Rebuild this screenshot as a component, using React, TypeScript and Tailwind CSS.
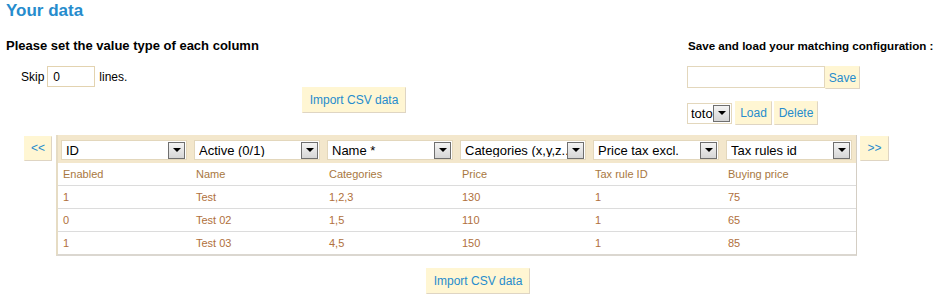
import React from 'react';

const columns = [
  'ID',
  'Active (0/1)',
  'Name *',
  'Categories (x,y,z...)',
  'Price tax excl.',
  'Tax rules id',
];

const labels = ['Enabled', 'Name', 'Categories', 'Price', 'Tax rule ID', 'Buying price'];

const rows = [
  ['1', 'Test', '1,2,3', '130', '1', '75'],
  ['0', 'Test 02', '1,5', '110', '1', '65'],
  ['1', 'Test 03', '4,5', '150', '1', '85'],
];

const Button = ({ children, className = '' }: { children: React.ReactNode; className?: string }) => (
  <button
    className={`flex items-center justify-center bg-[#fff6d3] border border-[#fff6d3] border-r-[#dfd5c3] border-b-[#dfd5c3] text-[#268ccd] text-[12px] leading-none ${className}`}
  >
    {children}
  </button>
);

const Arrow = () => (
  <span className="flex items-center justify-center w-[17px] h-[17px] shrink-0 border border-[#6f6f6f] bg-gradient-to-b from-[#f4f4f4] to-[#d6d6d6]">
    <span className="w-0 h-0 border-x-[4px] border-x-transparent border-t-[4px] border-t-black" />
  </span>
);

const FakeSelect = ({ value, className = '' }: { value: string; className?: string }) => (
  <div
    className={`flex items-center bg-white border border-[#e3d7bc] text-[13px] text-black leading-none ${className}`}
  >
    <span className="flex-1 min-w-0 overflow-hidden whitespace-nowrap">{value}</span>
    <Arrow />
  </div>
);

export default function App() {
  return (
    <div className="w-[938px] h-[301px] bg-white overflow-hidden font-['Liberation_Sans',Arial,sans-serif] text-[12px] text-black">
      <h2 className="pl-[6px] text-[17px] leading-[22px] font-bold text-[#268ccd]">Your data</h2>

      <div className="flex mt-[16px] h-[87px]">
        <div className="w-[687px] shrink-0">
          <p className="pl-[6px] font-bold text-[13px] leading-[15px]">
            Please set the value type of each column
          </p>
          <div className="flex items-center pl-[21px] mt-[13px] h-[21px]">
            <span>Skip</span>
            <div className="ml-[3px] w-[48px] h-[21px] border border-[#e3d3b0] bg-white flex items-center pl-[5px] text-[12px]">
              0
            </div>
            <span className="ml-[4px]">lines.</span>
          </div>
          <div className="pl-[302px]">
            <Button className="w-[104px] h-[26px]">Import CSV data</Button>
          </div>
        </div>

        <div className="flex flex-col">
          <p className="pl-[1px] font-bold text-[11.6px] leading-[15px] whitespace-nowrap">
            Save and load your matching configuration :
          </p>
          <div className="flex mt-[13px]">
            <div className="w-[138px] h-[22px] border border-[#e3d7bc] bg-white" />
            <Button className="w-[35px] h-[23px]">Save</Button>
          </div>
          <div className="flex items-center mt-[12px] h-[24px]">
            <FakeSelect value="toto" className="w-[45px] h-[21px] pl-[3px] pr-[1px]" />
            <Button className="ml-[3px] w-[37px] h-[24px]">Load</Button>
            <Button className="ml-[2px] w-[44px] h-[24px]">Delete</Button>
          </div>
        </div>
      </div>

      <div className="flex items-start pl-[24px] mt-[10px]">
        <Button className="mt-[1px] w-[28px] h-[25px] text-[9px] pb-[2px]">&lt;&lt;</Button>
        <div className="ml-[4px] w-[801px] border-l-2 border-[#e6dcc4] border-r border-r-[#d4cec4] border-b-2 border-b-[#dbd7d0] bg-white">
          <div className="grid grid-cols-6 h-[28px] bg-[#f3e7cc] pt-[5px]">
            {columns.map((c) => (
              <div key={c} className="pl-[3px]">
                <FakeSelect value={c} className="w-[126px] h-[20px] pl-[4px] pr-[1px]" />
              </div>
            ))}
          </div>
          <div className="grid grid-cols-6 h-[23px] border-b border-[#dcdcdc] text-[11px] text-[#a8773e]">
            {labels.map((l) => (
              <div key={l} className="flex items-center pl-[5px]">
                {l}
              </div>
            ))}
          </div>
          {rows.map((r, i) => (
            <div
              key={i}
              className={`grid grid-cols-6 text-[11px] text-[#b0703c] ${
                i < rows.length - 1 ? 'h-[23px] border-b border-[#dcdcdc]' : 'h-[22px]'
              }`}
            >
              {r.map((v, j) => (
                <div key={j} className="flex items-center pl-[5px]">
                  {v}
                </div>
              ))}
            </div>
          ))}
        </div>
        <Button className="ml-[3px] mt-[1px] w-[29px] h-[25px] text-[9px] pb-[2px]">&gt;&gt;</Button>
      </div>

      <div className="pl-[426px] mt-[12px]">
        <Button className="w-[104px] h-[26px]">Import CSV data</Button>
      </div>
    </div>
  );
}
